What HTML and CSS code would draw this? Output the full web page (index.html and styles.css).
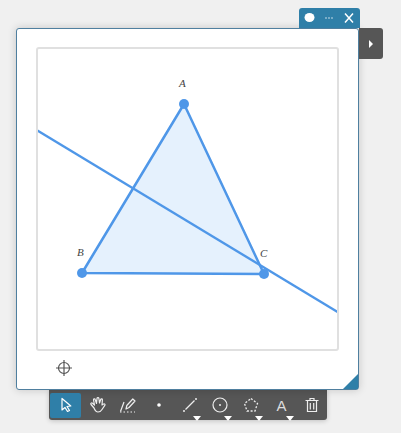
FILE: index.html
```html
<!DOCTYPE html>
<html lang="en">
<head>
<meta charset="utf-8">
<title>Geometry</title>
<link rel="stylesheet" href="styles.css">
</head>
<body>
<div class="stage">
  <div class="window">
    <div class="tab">
      <svg class="tab-icon" width="61" height="20" viewBox="0 0 61 20">
        <ellipse cx="10.5" cy="9.500" rx="5" ry="4.500" fill="#fff"/>
        <circle cx="27" cy="10" r=".8" fill="#d5e5ee"/><circle cx="30" cy="10" r=".8" fill="#d5e5ee"/><circle cx="33" cy="10" r=".8" fill="#d5e5ee"/>
        <path d="M46 5.500l8 9M54 5.500l-8 9" stroke="#fff" stroke-width="1.500" fill="none"/>
      </svg>
    </div>
    <div class="side"><span class="side-arrow"></span></div>
    <div class="canvas">
      <svg class="drawing" width="299" height="300" viewBox="38 48 299 300">
        <polygon points="184,103 82,272 264,273" fill="#e5f1fd" stroke="#4f97e8" stroke-width="2.500" stroke-linejoin="round"/>
        <line x1="30" y1="125" x2="345" y2="315.500" stroke="#4f97e8" stroke-width="2.500"/>
        <circle cx="184" cy="103" r="5" fill="#4f97e8"/>
        <circle cx="82" cy="272" r="5" fill="#4f97e8"/>
        <circle cx="264" cy="273" r="5" fill="#4f97e8"/>
        <text class="label" x="179" y="86">A</text>
        <text class="label" x="77" y="255">B</text>
        <text class="label" x="260" y="256">C</text>
      </svg>
    </div>
    <div class="status">
      <svg width="18" height="18" viewBox="0 0 18 18" fill="none" stroke="#555" stroke-width="1.200">
        <circle cx="9" cy="9" r="5.500"/>
        <path d="M9 1v16M1 9h16"/>
      </svg>
    </div>
    <div class="grip"></div>
  </div>
  <div class="toolbar">
    <button class="tool active" type="button">
      <svg width="20" height="20" viewBox="0 0 20 20" fill="none" stroke="#fff" stroke-width="1.200"><path d="M6 3.500v11.500l3-2.500 2.500 4 2-1-2.500-4 3.800-.5z" stroke-linejoin="round"/></svg>
    </button>
    <button class="tool" type="button">
      <svg width="20" height="20" viewBox="-2 0 20 20" fill="none" stroke="#eee" stroke-width="1.200" stroke-linecap="round" stroke-linejoin="round"><path d="M5 13L2 9.500c-.8-1 .6-2.200 1.500-1.300L5.500 10 4.500 5c-.2-1.200 1.500-1.500 1.800-.3L7.500 8.500 8 3.500c.1-1.200 1.800-1.200 1.900 0L10.500 8l1.200-3.500c.4-1.100 1.900-.7 1.700.4L13 10l1.500-1c1-.7 2 .4 1.300 1.300L13 14.500c-1 1.800-2.200 2.500-4 2.500-2 0-3-1.500-4-4z"/></svg>
    </button>
    <button class="tool" type="button">
      <svg width="20" height="20" viewBox="0 0 20 20" fill="none" stroke="#eee" stroke-width="1.200" stroke-linejoin="round"><path d="M8 14l.8-3.500 6-6.500 2.200 2-6 6.500z"/><path d="M6 7L2.500 16.500"/><path d="M2 17h15" stroke-dasharray="1.500 2"/></svg>
    </button>
    <button class="tool" type="button">
      <svg width="20" height="20" viewBox="0 0 20 20"><circle cx="10" cy="10" r="1.800" fill="#fff"/></svg>
    </button>
    <button class="tool has-menu" type="button">
      <svg width="20" height="20" viewBox="0 0 20 20" fill="none" stroke="#eee" stroke-width="1.200"><path d="M5.500 14.500l9-9"/><circle cx="4" cy="16" r="1" fill="#eee" stroke="none"/><circle cx="16" cy="4" r="1" fill="#eee" stroke="none"/></svg>
    </button>
    <button class="tool has-menu" type="button">
      <svg width="20" height="20" viewBox="1 0 20 20" fill="none" stroke="#eee" stroke-width="1.200"><circle cx="10" cy="10" r="7"/><circle cx="10" cy="10" r="1" fill="#eee" stroke="none"/></svg>
    </button>
    <button class="tool has-menu" type="button">
      <svg width="20" height="20" viewBox="1 0 20 20" fill="none" stroke="#eee" stroke-width="1.300" stroke-dasharray="2 1.700"><path d="M10 3.500l6.500 5-2.500 7.500H6L3.500 8.500z"/></svg>
    </button>
    <button class="tool has-menu" type="button"><span class="tool-text">A</span></button>
    <button class="tool" type="button">
      <svg width="20" height="20" viewBox="2 0 20 20" fill="none" stroke="#eee" stroke-width="1.200"><path d="M3.500 5.500h13M8 5.500V3.500h4v2M5.500 5.500v11h9v-11M8.300 8v6.500M11.700 8v6.500"/></svg>
    </button>
  </div>
</div>
</body>
</html>
```
FILE: styles.css
```css
* { box-sizing: border-box; }
html, body { margin: 0; padding: 0; height: 100%; overflow: hidden; }
body { background: #f0f0f0; font-family: "Liberation Sans", Arial, sans-serif; }
.stage { padding: 28px 0 0 16px; }
.window {
  position: relative;
  width: 343px;
  height: 362px;
  padding: 18px 18px 0 19px;
  background: #fff;
  border: 1px solid #4f7f9f;
  border-radius: 3px;
  box-shadow: 0 0 8px rgba(0, 0, 0, .18);
}
.tab {
  position: absolute;
  top: -21px;
  right: -2px;
  width: 61px;
  height: 20px;
  background: #2f7fa8;
  border-radius: 3px 3px 0 0;
}
.tab-icon { display: block; }
.side {
  position: absolute;
  top: -1px;
  left: 342px;
  width: 24px;
  height: 31px;
  display: flex;
  align-items: center;
  justify-content: center;
  background: #565656;
  border-radius: 0 3px 3px 0;
}
.side-arrow {
  width: 0;
  height: 0;
  border-left: 4px solid #fff;
  border-top: 4px solid transparent;
  border-bottom: 4px solid transparent;
}
.canvas {
  width: 303px;
  height: 304px;
  border: 2px solid #e0e0e0;
  border-radius: 3px;
  background: #fff;
  overflow: hidden;
}
.drawing { display: block; }
.label { font-family: "Liberation Serif", serif; font-style: italic; font-size: 11px; fill: #444; }
.status { padding: 8px 0 0 19px; height: 36px; }
.status svg { display: block; }
.grip {
  position: absolute;
  right: 0;
  bottom: 0;
  width: 0;
  height: 0;
  border-left: 15px solid transparent;
  border-bottom: 15px solid #2f7fa8;
}
.toolbar {
  display: flex;
  align-items: center;
  width: 278px;
  height: 30px;
  margin: 0 0 0 33px;
  padding-left: 1px;
  background: #565656;
  border-radius: 0 0 3px 3px;
  box-shadow: 0 1px 5px rgba(0, 0, 0, .2);
}
.tool {
  position: relative;
  flex: 0 0 31px;
  height: 25px;
  margin: 0;
  padding: 0;
  display: flex;
  align-items: center;
  justify-content: center;
  background: none;
  border: 0;
}
.tool.active { background: #2f7fa8; border-radius: 2px; }
.has-menu::after {
  content: "";
  position: absolute;
  right: 4px;
  bottom: -3px;
  width: 0;
  height: 0;
  border-top: 5px solid #fff;
  border-left: 4.5px solid transparent;
  border-right: 4.5px solid transparent;
}
.tool-text { margin-right: 2px; font-family: "Liberation Sans", Arial, sans-serif; font-size: 15px; font-weight: 300; color: #ddd; }
```
